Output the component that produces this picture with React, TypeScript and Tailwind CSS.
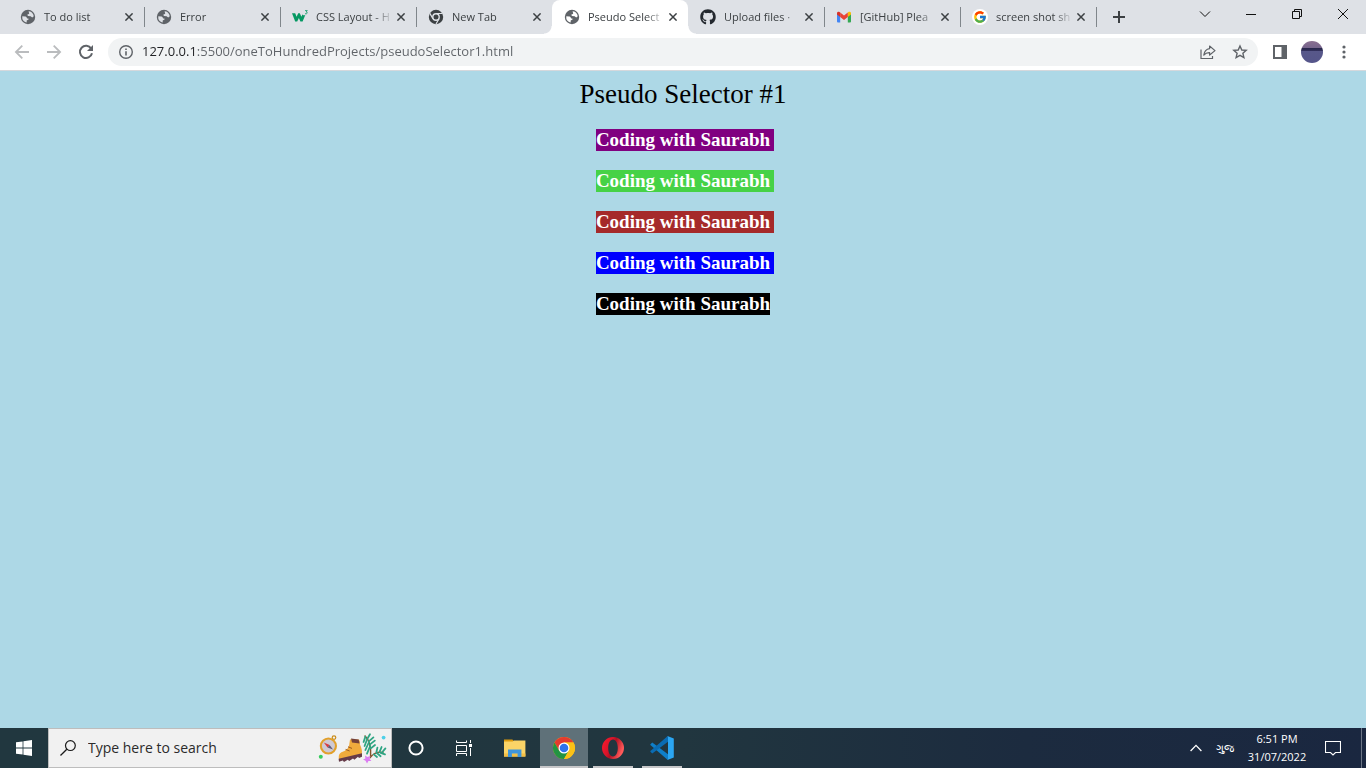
import React from "react";
import { FcGoogle } from "react-icons/fc";
import { FaGithub } from "react-icons/fa";

type IconProps = { className?: string };

function GlobeIcon({ className }: IconProps) {
  return (
    <svg viewBox="0 0 16 16" className={className} aria-hidden="true">
      <path
        fillRule="evenodd"
        fill="#5f6368"
        d="M8 0.8 A7.2 7.2 0 1 0 8 15.2 A7.2 7.2 0 1 0 8 0.8Z M2.3 7.2 L5.6 7.6 Q6.6 7.8 6.9 8.9 Q7.2 9.6 8.4 9.5 L8.6 10.6 L6.7 11.4 V13.4 Q3 12.6 2.3 9.4Z M8.6 2.3 Q12 2.5 13.5 6 L13.6 7.4 L12.2 8.6 L10.6 7.3 L8 7 L7.2 5.8 L9.2 4.8Z"
      />
    </svg>
  );
}

function W3Icon({ className }: IconProps) {
  return (
    <svg viewBox="0 0 16 16" className={className} aria-hidden="true">
      <path
        d="M0 4.2 H3.2 L4.6 7.8 L6.2 4.2 H7.8 L9.4 7.8 L10.4 5.6 L12 6.6 L13.4 5.8 L10.6 12.6 H8.4 L6.9 9 L5.2 12.6 H3.2Z"
        fill="#059862"
      />
      <path
        d="M13 1.6 H15.3 L14.2 2.9 Q15.5 3.1 15.2 4.2 Q14.6 5.2 13 4.7"
        fill="none"
        stroke="#059862"
        strokeWidth="0.8"
      />
    </svg>
  );
}

function ChromeMonoIcon({ className }: IconProps) {
  return (
    <svg viewBox="0 0 16 16" className={className} aria-hidden="true">
      <circle cx="8" cy="8" r="7.2" fill="#3c4043" />
      <circle cx="8" cy="8" r="3.9" fill="#dee1e6" />
      <circle cx="8" cy="8" r="2.5" fill="#3c4043" />
      <path
        d="M8 4.5 H14.3 M4.9 9.7 L1.9 4.4 M11 9.8 L8 15"
        stroke="#dee1e6"
        strokeWidth="1.2"
        fill="none"
      />
    </svg>
  );
}

function GmailIcon({ className }: IconProps) {
  return (
    <svg viewBox="0 0 16 16" className={className} aria-hidden="true">
      <path d="M1 4 V12.4 Q1 13.4 2 13.4 H4.2 V7 Z" fill="#4285f4" />
      <path d="M15 4 V12.4 Q15 13.4 14 13.4 H11.8 V7 Z" fill="#34a853" />
      <path d="M11.8 3.6 V8 L15 5.6 V4.2 Q14.8 2.4 12.9 2.8Z" fill="#fbbc04" />
      <path d="M4.2 8 V3.6 L8 6.5 L11.8 3.6 V8 L8 10.9Z" fill="#ea4335" />
      <path d="M1 4.2 V5.6 L4.2 8 V3.6 L3.1 2.8 Q1.2 2.4 1 4.2Z" fill="#d93025" />
    </svg>
  );
}

function GoogleIcon({ className }: IconProps) {
  return (
    <span className={`${className} flex items-center justify-center rounded-full bg-white`}>
      <FcGoogle className="size-[14px]" />
    </span>
  );
}

function GithubIcon({ className }: IconProps) {
  return <FaGithub className={`${className} text-[#24292f]`} />;
}

function ChromeIcon() {
  return (
    <svg viewBox="0 0 24 24" className="size-6" aria-hidden="true">
      <circle cx="12" cy="12" r="11" fill="#fbc116" />
      <path d="M2.47 6.5 A11 11 0 0 1 21.53 6.5 L12 6.5 L7.24 14.75Z" fill="#e33b2e" />
      <path d="M2.47 6.5 A11 11 0 0 0 12 23 L16.76 14.75 L7.24 14.75Z" fill="#229342" />
      <path d="M21.53 6.5 A11 11 0 0 1 12 23 L16.76 14.75 L12 6.5Z" fill="#fbc116" />
      <circle cx="12" cy="12" r="5.5" fill="#fff" />
      <circle cx="12" cy="12" r="4.3" fill="#2f73ea" />
    </svg>
  );
}

function OperaIcon() {
  return (
    <svg viewBox="0 0 24 24" className="size-6" aria-hidden="true">
      <defs>
        <linearGradient id="opera" x1="0" x2="1" y1="0" y2="0.4">
          <stop offset="0" stopColor="#ff1b2d" />
          <stop offset="0.45" stopColor="#d8142a" />
          <stop offset="0.6" stopColor="#b01022" />
          <stop offset="1" stopColor="#ff5a5a" />
        </linearGradient>
      </defs>
      <path
        fillRule="evenodd"
        fill="url(#opera)"
        d="M12 1 A11 11 0 1 0 12 23 A11 11 0 1 0 12 1Z M12 3.5 C15 3.5 16.8 7.2 16.8 12 S15 20.5 12 20.5 S7.2 16.8 7.2 12 S9 3.5 12 3.5Z"
      />
    </svg>
  );
}

function CodeIcon() {
  return (
    <svg viewBox="0 0 24 24" className="size-6" aria-hidden="true">
      <path d="M0.4 8.2 L2.3 6.6 L18 18.3 V24 L17.2 23.6 L0.4 8.9Z" fill="#0f7fc9" />
      <path d="M0.4 15.8 L2.3 17.4 L18 5.7 V0 L17.2 0.4 L0.4 15.1Z" fill="#0a6cb3" />
      <path d="M17.4 0.1 L23.8 2.6 V21.4 L17.4 23.9 L18 23 V1Z" fill="#2ba6f2" />
    </svg>
  );
}

function FolderIcon() {
  return (
    <svg viewBox="0 0 24 24" className="size-6" aria-hidden="true">
      <path d="M1 3.4 H9.4 L11 5.2 V8 H1Z" fill="#dd9a0d" />
      <path d="M1 5.6 H9.6 L11 4.4 H22.4 V20.6 H1Z" fill="#fbd467" />
      <path d="M1 17.5 H22.4 V20.6 H1Z" fill="#f3bf45" />
      <path d="M5 13.4 H18.4 V21 H14.6 V17.4 H8.9 V21 H5Z" fill="#3f95da" />
    </svg>
  );
}

function SearchArt() {
  return (
    <svg viewBox="0 0 80 36" className="h-9 w-20" aria-hidden="true">
      <circle cx="24" cy="7.6" r="1.8" fill="none" stroke="#c98d1c" strokeWidth="1.2" />
      <circle cx="18.4" cy="16" r="8.6" fill="#e2a02b" />
      <circle cx="18.4" cy="16" r="6.5" fill="#cfc9d3" />
      <path d="M13.8 12.6 L19.6 15 L17.6 17.4Z" fill="#d93a3f" />
      <path d="M23 19.6 L19.6 15 L17.6 17.4Z" fill="#5c5a78" />
      <circle cx="10.8" cy="26.8" r="2" fill="#36cc5c" />
      <path
        d="M40 9.6 L49 9.4 Q50.4 11 49.8 14 Q52.6 20 51.8 24 L29 29.6 Q27.8 24 31.4 22.2 Q38.4 20.4 39.2 15Z"
        fill="#f0aa3c"
      />
      <path d="M41 8.6 L48.6 9.4 L49.6 13.6 L42 12.4Z" fill="#744039" />
      <path d="M35.6 19.4 L39.6 21 M38 16.8 L42 18.4" stroke="#9a5a20" strokeWidth="1" />
      <path
        d="M28.6 28.8 L52 23.2 V26.8 L49 28 L48 26.8 L44.4 29.8 L43 28.4 L39.2 31 L37.8 29.8 L34 32 L32.8 30.6 L29 31.8Z"
        fill="#653a48"
      />
      <path d="M54.6 5.6 Q61.6 12 60.6 27 Q65.6 21 73.6 22.4" stroke="#85522b" strokeWidth="1.4" fill="none" />
      <path
        d="M55.4 6.6 L53.6 12 M57.2 9 L54.6 16 M59 12 L55.4 20 M60.2 16 L57 23.6 M57.2 9 L60 4.2 M58.8 11.4 L63.4 7.4 M60 14.4 L64.8 10.6 M60.8 18.4 L65 15"
        stroke="#2fa583"
        strokeWidth="1.8"
        strokeLinecap="round"
      />
      <path
        d="M66.4 22.2 L67.4 17.6 M69.6 21.8 L71.6 17 M72.4 22 L75.4 18.4 M66.6 22.8 L70.6 26.2 M70.6 22.8 L75 24.4 M63.8 24.4 L67 27"
        stroke="#2fa583"
        strokeWidth="1.8"
        strokeLinecap="round"
      />
      <circle cx="73.6" cy="7.6" r="1.9" fill="#4dd0e8" />
      <path d="M55 25.4 L57.4 27 L60.4 26 L59.6 29 L61.4 31 L58.4 31 L57 33.6 L55.6 30.8 L53 29.6 L55.4 28.4Z" fill="#dc7cf2" />
    </svg>
  );
}

type Tab = { title: string; icon: (p: IconProps) => React.ReactElement; active?: boolean; divider?: boolean };

const tabs: Tab[] = [
  { title: "To do list", icon: GlobeIcon, divider: true },
  { title: "Error", icon: GlobeIcon, divider: true },
  { title: "CSS Layout - H", icon: W3Icon, divider: true },
  { title: "New Tab", icon: ChromeMonoIcon },
  { title: "Pseudo Select", icon: GlobeIcon, active: true },
  { title: "Upload files ·", icon: GithubIcon, divider: true },
  { title: "[GitHub] Plea", icon: GmailIcon, divider: true },
  { title: "screen shot sh", icon: GoogleIcon, divider: true },
];

function TabItem({ title, icon: Icon, active, divider }: Tab) {
  return (
    <div
      className={`relative flex h-[34px] w-[136px] min-w-0 items-center pr-[7px] pl-3 ${
        active ? "rounded-t-lg bg-white" : ""
      }`}
    >
      {active && (
        <>
          <span className="absolute bottom-0 -left-2 size-2 bg-[radial-gradient(circle_at_0_0,transparent_7px,white_8px)]" />
          <span className="absolute -right-2 bottom-0 size-2 bg-[radial-gradient(circle_at_100%_0,transparent_7px,white_8px)]" />
        </>
      )}
      <button role="tab" aria-selected={!!active} className="flex min-w-0 flex-1 items-center gap-2 text-left">
        <Icon className="size-4 shrink-0" />
        <span className="flex-1 overflow-hidden mask-r-from-75% text-[11px] whitespace-nowrap text-[#3c4043]">
          {title}
        </span>
      </button>
      <button aria-label={`Close ${title}`} className="flex size-4 shrink-0 items-center justify-center">
        <svg viewBox="0 0 8 8" className="size-2" aria-hidden="true">
          <path d="M0.4 0.4 L7.6 7.6 M7.6 0.4 L0.4 7.6" stroke="#3c4043" strokeWidth="1.5" />
        </svg>
      </button>
      {divider && <span className="absolute top-[7px] -right-px h-5 w-px bg-[#80868b]" />}
    </div>
  );
}

function TabStrip() {
  return (
    <header className="flex h-[34px] items-start bg-[#dee1e6] pl-2">
      <div role="tablist" className="flex min-w-0">
        {tabs.map((t) => (
          <TabItem key={t.title} {...t} />
        ))}
      </div>
      <button aria-label="New tab" className="ml-[9px] flex h-[34px] w-7 items-center justify-center">
        <svg viewBox="0 0 12 12" className="size-3" aria-hidden="true">
          <path d="M6 0 V12 M0 6 H12" stroke="#3c4043" strokeWidth="2" />
        </svg>
      </button>
      <div className="ml-auto flex">
        {[
          { label: "Search tabs", d: "M1 3.5 L6 8.5 L11 3.5" },
          { label: "Minimize", d: "M1 6.5 H11" },
          { label: "Restore", d: "M1.5 3.5 H8.5 V10.5 H1.5Z M3.5 3.5 V1.5 H10.5 V8.5 H8.5" },
          { label: "Close", d: "M1 1 L11 11 M11 1 L1 11" },
        ].map((c) => (
          <button key={c.label} aria-label={c.label} className="flex h-7 w-[46px] items-center justify-center">
            <svg viewBox="0 0 12 12" className="size-3" aria-hidden="true">
              <path d={c.d} fill="none" stroke="#111" strokeWidth="1" />
            </svg>
          </button>
        ))}
      </div>
    </header>
  );
}

function ToolButton({ label, children }: { label: string; children: React.ReactNode }) {
  return (
    <button aria-label={label} className="flex size-7 items-center justify-center">
      {children}
    </button>
  );
}

function Toolbar() {
  return (
    <div className="flex h-[37px] items-center gap-2 border-b border-[#d5d8dc] bg-white px-2">
      <div className="flex gap-1">
        <ToolButton label="Back">
          <svg viewBox="0 0 16 16" className="size-4" aria-hidden="true">
            <path d="M15 8 H2 M8.3 1.6 L1.9 8 L8.3 14.4" fill="none" stroke="#babcbe" strokeWidth="1.8" />
          </svg>
        </ToolButton>
        <ToolButton label="Forward">
          <svg viewBox="0 0 16 16" className="size-4" aria-hidden="true">
            <path d="M1 8 H14 M7.7 1.6 L14.1 8 L7.7 14.4" fill="none" stroke="#babcbe" strokeWidth="1.8" />
          </svg>
        </ToolButton>
        <ToolButton label="Reload">
          <svg viewBox="0 0 16 16" className="size-4" aria-hidden="true">
            <path d="M13.2 4.6 A6.1 6.1 0 1 0 14 9.3" fill="none" stroke="#5f6368" strokeWidth="2" />
            <path d="M15 1 V7 H9Z" fill="#5f6368" />
          </svg>
        </ToolButton>
      </div>
      <div className="flex h-7 min-w-0 flex-1 items-center gap-2 rounded-full bg-[#f1f3f4] pr-1 pl-[10px]">
        <button aria-label="Site information" className="size-4">
          <svg viewBox="0 0 16 16" className="size-4" aria-hidden="true">
            <circle cx="8" cy="8" r="6.3" fill="none" stroke="#5f6368" strokeWidth="1.4" />
            <path d="M8 7.2 V11.4 M8 4.4 V6" stroke="#5f6368" strokeWidth="1.6" />
          </svg>
        </button>
        <input
          aria-label="Address"
          spellCheck={false}
          defaultValue="127.0.0.1:5500/oneToHundredProjects/pseudoSelector1.html"
          className="min-w-0 flex-1 bg-[linear-gradient(90deg,#202124_54px,#5f6368_54px)] bg-clip-text text-[13px] text-transparent outline-none"
        />
        <div className="flex gap-1">
          <ToolButton label="Share">
            <svg viewBox="0 0 16 16" className="size-4" aria-hidden="true">
              <path d="M1 5.5 V14.5 H12.5 V12" fill="none" stroke="#5f6368" strokeWidth="1.2" />
              <path
                d="M9.6 2 L15 6.6 L9.6 11 V8.6 Q6 8.4 3.8 11.2 Q4.6 5.4 9.6 4.7Z"
                fill="none"
                stroke="#5f6368"
                strokeWidth="1.2"
                strokeLinejoin="round"
              />
            </svg>
          </ToolButton>
          <ToolButton label="Bookmark">
            <svg viewBox="0 0 16 16" className="size-4" aria-hidden="true">
              <path
                d="M8 2 L9.8 6 L14.2 6.4 L10.9 9.3 L11.9 13.6 L8 11.3 L4.1 13.6 L5.1 9.3 L1.8 6.4 L6.2 6Z"
                fill="none"
                stroke="#5f6368"
                strokeWidth="1.4"
              />
            </svg>
          </ToolButton>
        </div>
      </div>
      <div className="flex gap-1">
        <ToolButton label="Side panel">
          <svg viewBox="0 0 14 14" className="size-[14px]" aria-hidden="true">
            <path fillRule="evenodd" d="M0 0 H14 V14 H0Z M2 2 V12 H8.5 V2Z" fill="#5f6368" />
          </svg>
        </ToolButton>
        <ToolButton label="Profile">
          <span className="size-[22px] rounded-full bg-[linear-gradient(180deg,#8a6f90_0,#75648c_32%,#27264a_33%,#2f2d58_43%,#58588a_46%,#55558a_100%)]" />
        </ToolButton>
        <ToolButton label="Menu">
          <svg viewBox="0 0 4 14" className="h-[14px] w-1" aria-hidden="true">
            <circle cx="2" cy="2" r="1.6" fill="#5f6368" />
            <circle cx="2" cy="7" r="1.6" fill="#5f6368" />
            <circle cx="2" cy="12" r="1.6" fill="#5f6368" />
          </svg>
        </ToolButton>
      </div>
    </div>
  );
}

function Page() {
  const rows = ["bg-[#800080]", "bg-[#46d246]", "bg-[#a52a2a]", "bg-[#0000ff]"];
  return (
    <main className="flex flex-1 flex-col items-center bg-[#add8e6] pt-2 font-['Liberation_Serif','Times_New_Roman',serif]">
      <h1 className="text-[27px] leading-[30px] text-black">Pseudo Selector #1</h1>
      <div className="mt-5 flex flex-col items-center gap-[19px] text-[19px] leading-[22px] font-bold text-white">
        {rows.map((bg) => (
          <p key={bg} className={`-mr-1 pr-1 ${bg}`}>
            Coding with Saurabh
          </p>
        ))}
        <p className="bg-black">Coding with Saurabh</p>
      </div>
    </main>
  );
}

function TaskButton({
  label,
  active,
  running,
  children,
}: {
  label: string;
  active?: boolean;
  running?: boolean;
  children: React.ReactNode;
}) {
  return (
    <button
      aria-label={label}
      className={`flex h-10 w-12 flex-col items-center justify-between pt-2 ${active ? "bg-[#5f7179]" : ""}`}
    >
      {children}
      <span className={`h-[2px] ${active ? "w-12" : "w-10"} ${active || running ? "bg-[#c6c6c8]" : ""}`} />
    </button>
  );
}

function Taskbar() {
  return (
    <footer className="flex h-10 items-stretch bg-[linear-gradient(90deg,#21373f_0%,#21363f_50%,#1c2b3f_75%,#1a2740_100%)] text-white">
      <button aria-label="Start" className="flex w-12 items-center justify-center">
        <svg viewBox="0 0 16 16" className="size-4" aria-hidden="true">
          <path
            d="M0 2.3 L6.6 1.4 V7.6 H0Z M7.4 1.2 L16 0 V7.6 H7.4Z M0 8.4 H6.6 V14.6 L0 13.7Z M7.4 8.4 H16 V16 L7.4 14.8Z"
            fill="#fff"
          />
        </svg>
      </button>
      <label className="flex w-[344px] items-center border border-[#bdbdbd] bg-[#f1f1f1] pr-px pl-[11px]">
        <svg viewBox="0 0 16 16" className="size-4 shrink-0" aria-hidden="true">
          <circle cx="10.4" cy="5.6" r="4.9" fill="none" stroke="#1a1a1a" strokeWidth="1.2" />
          <path d="M6.8 9.2 L0.5 15.5" stroke="#1a1a1a" strokeWidth="1.3" />
        </svg>
        <input
          type="text"
          aria-label="Search"
          placeholder="Type here to search"
          className="ml-3 min-w-0 flex-1 text-sm text-[#2b2b2b] outline-none placeholder:text-[#2b2b2b]"
        />
        <SearchArt />
      </label>
      <button aria-label="Cortana" className="flex w-12 items-center justify-center">
        <svg viewBox="0 0 16 16" className="size-4" aria-hidden="true">
          <circle cx="8" cy="8" r="6.6" fill="none" stroke="#fff" strokeWidth="2" />
        </svg>
      </button>
      <button aria-label="Task view" className="flex w-12 items-center justify-center">
        <svg viewBox="0 0 16 16" className="size-4" aria-hidden="true">
          <path
            d="M0.5 0.5 V2.5 H10.5 V0.5 M0.5 5.5 H10.5 V11.5 H0.5Z M0.5 16 V13.5 H10.5 V16 M14.5 0 V3 M14.5 8 V16"
            fill="none"
            stroke="#fff"
          />
          <path d="M13 4 H16 V7 H13Z" fill="#fff" />
        </svg>
      </button>
      <div className="ml-[3px] flex gap-px">
        <TaskButton label="File Explorer">
          <FolderIcon />
        </TaskButton>
        <TaskButton label="Google Chrome" active>
          <ChromeIcon />
        </TaskButton>
        <TaskButton label="Opera" running>
          <OperaIcon />
        </TaskButton>
        <TaskButton label="Visual Studio Code" running>
          <CodeIcon />
        </TaskButton>
      </div>
      <div className="ml-auto flex items-stretch">
        <button aria-label="Show hidden icons" className="flex w-6 items-center justify-center">
          <svg viewBox="0 0 12 8" className="h-2 w-3" aria-hidden="true">
            <path d="M0.6 7 L6 1.4 L11.4 7" fill="none" stroke="#fff" strokeWidth="1.3" />
          </svg>
        </button>
        <button className="w-[34px] text-center text-[11px]" lang="gu">
          ગુજ
        </button>
        <button className="w-[70px] text-center text-[11px] leading-[18px] whitespace-nowrap">
          <span className="block">6:51 PM</span>
          <span className="block">31/07/2022</span>
        </button>
        <button aria-label="Notifications" className="flex w-[42px] items-center justify-center">
          <svg viewBox="0 0 16 16" className="size-4" aria-hidden="true">
            <path d="M0.5 1.5 H15.5 V12.5 H10.5 L8 15 L5.5 12.5 H0.5Z" fill="none" stroke="#fff" strokeWidth="1.1" />
          </svg>
        </button>
        <button aria-label="Show desktop" className="ml-[7px] w-[5px] border-l border-[#6b7585]" />
      </div>
    </footer>
  );
}

export default function App() {
  return (
    <div className="flex min-h-screen flex-col font-['Open_Sans','Noto_Sans',sans-serif]">
      <TabStrip />
      <Toolbar />
      <Page />
      <Taskbar />
    </div>
  );
}
